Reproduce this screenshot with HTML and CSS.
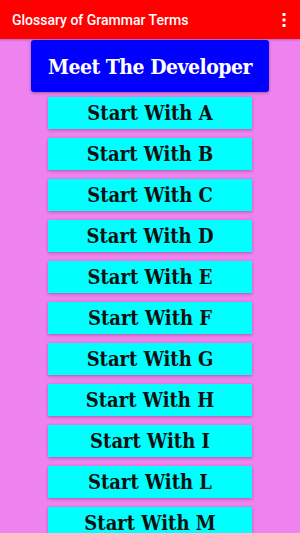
FILE: index.html
```html
<!DOCTYPE html>
<html lang="en">
<head>
    <meta charset="UTF-8">
    <meta name="viewport" content="width=device-width, initial-scale=1.0">
    <title>Glossary of Grammar Terms</title>
    <link rel="stylesheet" href="styles.css">
</head>
<body>
    <div class="app-bar">
        <span class="app-title">Glossary of Grammar Terms</span>
        <svg class="menu-icon" width="4" height="14" viewBox="0 0 4 14">
            <rect x="0.5" y="0" width="3" height="3" fill="#fff"/>
            <rect x="0.5" y="5.5" width="3" height="3" fill="#fff"/>
            <rect x="0.5" y="11" width="3" height="3" fill="#fff"/>
        </svg>
    </div>

    <div class="content">
        <button class="dev-btn">Meet The Developer</button>
        <button class="letter-btn">Start With A</button>
        <button class="letter-btn">Start With B</button>
        <button class="letter-btn">Start With C</button>
        <button class="letter-btn">Start With D</button>
        <button class="letter-btn">Start With E</button>
        <button class="letter-btn">Start With F</button>
        <button class="letter-btn">Start With G</button>
        <button class="letter-btn">Start With H</button>
        <button class="letter-btn">Start With I</button>
        <button class="letter-btn">Start With L</button>
        <button class="letter-btn">Start With M</button>
    </div>
</body>
</html>
```

FILE: styles.css
```css
body {
    margin: 0;
    background-color: #ee82ee;
    font-family: "Noto Sans", sans-serif;
    overflow: hidden;
    height: 533px;
}

/* Barra superior */
.app-bar {
    height: 39px;
    background: #ff0000;
    display: flex;
    align-items: center;
    justify-content: space-between;
    padding: 0 14px 0 12px;
    box-shadow: 0 1px 2px rgba(0, 0, 0, 0.25);
}

.app-title {
    color: #fff;
    font-family: Roboto, sans-serif;
    font-weight: 500;
    font-size: 14px;
}

.menu-icon {
    display: block;
}

/* Lista de botones */
.content {
    display: flex;
    flex-direction: column;
    align-items: center;
    padding-top: 1px;
}

button {
    border: none;
    cursor: pointer;
    font-family: "DejaVu Serif Condensed", "DejaVu Serif", serif;
    font-stretch: condensed;
    font-weight: bold;
    padding: 0;
    flex-shrink: 0;
}

.dev-btn {
    width: 238px;
    height: 52px;
    background: #0000ff;
    color: #fff;
    font-size: 21px;
    letter-spacing: -0.5px;
    border-radius: 3px;
    box-shadow: 0 1px 3px rgba(0, 0, 0, 0.35);
    margin-bottom: 5px;
}

.letter-btn {
    width: 204px;
    height: 32px;
    background: #00ffff;
    color: #111;
    font-size: 20px;
    box-shadow: 0 1px 3px rgba(0, 0, 0, 0.3);
    margin-bottom: 9px;
}
```
